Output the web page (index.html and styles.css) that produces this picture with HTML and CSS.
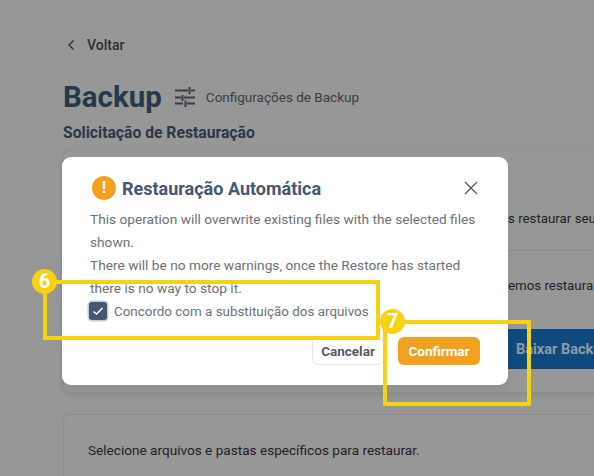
FILE: index.html
```html
<!DOCTYPE html>
<html lang="en">
<head>
    <meta charset="UTF-8">
    <title>Backup</title>
    <link rel="stylesheet" href="styles.css">
</head>
<body>
    <div id="page">
        <a class="back"><svg width="8" height="12" viewBox="0 0 8 12"><path d="M6.500 1.500 2 6l4.500 4.500" fill="none" stroke="#2b2f36" stroke-width="1.400"/></svg>Voltar</a>
        <header class="title-row">
            <h1>Backup</h1>
            <svg class="tune" width="20" height="20" viewBox="0 0 20 20"><path d="M0 3.500h13M14.500 0v7M16 3.500h4M0 10.500h6M7.500 8v6M9 10.500h11M0 16.500h8M10.500 13.500V20M12 16.500h8" fill="none" stroke="#3a3d42" stroke-width="2"/></svg>
            <span class="subtitle">Configurações de Backup</span>
        </header>
        <h2>Solicitação de Restauração</h2>
        <section class="card first">
            <p class="row one">s restaurar seu</p>
            <p class="row two">emos restaurar</p>
            <div class="card-actions"><button class="download">Baixar Backup</button></div>
        </section>
        <section class="card second">
            <p>Selecione arquivos e pastas específicos para restaurar.</p>
        </section>
    </div>

    <div id="modal">
        <div class="modal-head">
            <span class="warn">!</span>
            <h3>Restauração Automática</h3>
            <svg class="close" width="14" height="14" viewBox="0 0 14 14"><path d="M1 1l12 12M13 1 1 13" fill="none" stroke="#555b63" stroke-width="1.300"/></svg>
        </div>
        <p class="modal-text">This operation will overwrite existing files with the selected files shown.<br>There will be no more warnings, once the Restore has started there is no way to stop it.</p>
        <label class="agree">
            <span class="check"><svg width="12" height="10" viewBox="0 0 12 10"><path d="M1.500 5.500 4.500 8l6-6" fill="none" stroke="#fff" stroke-width="1.500"/></svg></span>
            Concordo com a substituição dos arquivos
        </label>
        <div class="modal-actions">
            <button class="cancel">Cancelar</button>
            <button class="confirm">Confirmar</button>
        </div>
    </div>

    <div class="callout box-six"></div>
    <span class="badge badge-six">6</span>
    <div class="callout box-seven"></div>
    <span class="badge badge-seven">7</span>
</body>
</html>
```

FILE: styles.css
```css
* {
    box-sizing: border-box;
}
html, body {
    margin: 0;
    height: 100%;
}
body {
    width: 594px;
    height: 476px;
    overflow: hidden;
    background: #979797;
    font-family: Roboto, sans-serif;
    color: #1f2126;
    position: relative;
}
#page {
    padding: 36px 0 0 63px;
    width: 594px;
    height: 476px;
    overflow: hidden;
}
.back {
    display: flex;
    align-items: center;
    gap: 12px;
    padding-left: 4px;
    font-size: 14px;
    font-weight: 500;
    line-height: 18px;
    color: #2b2f36;
}
.title-row {
    display: flex;
    align-items: center;
    margin-top: 23px;
    height: 40px;
}
h1 {
    margin: 0;
    font-size: 29.500px;
    font-weight: 700;
    color: #27384d;
}
.tune {
    margin-left: 13px;
}
.subtitle {
    margin-left: 11px;
    font-size: 13.500px;
    color: #3a3d42;
}
h2 {
    margin: 7px 0 0;
    font-size: 15.700px;
    line-height: 18px;
    font-weight: 700;
    color: #2b3648;
}
.card {
    width: 620px;
    border: 1px solid #8d8d8d;
    border-radius: 8px;
    padding: 0 24px;
}
.card p {
    margin: 0;
    font-size: 13.600px;
    line-height: 18px;
    white-space: nowrap;
}
.first {
    margin-top: 8px;
    height: 243px;
    border-top: none;
    box-shadow: 0 2px 6px rgba(0, 0, 0, 0.08);
}
.card .row {
    font-size: 13.300px;
    margin: 0 -24px;
}
.row.one {
    padding: 60px 24px 22px 444px;
    border-bottom: 1px solid #8a8a8a;
}
.row.two {
    padding: 26px 24px 0 444px;
}
.card-actions {
    display: flex;
    justify-content: flex-end;
    margin-top: 34px;
}
.download {
    width: 166px;
    height: 40px;
    border: none;
    border-radius: 6px;
    background: #0f4a7e;
    color: #8e9aa6;
    font: 700 14.500px Roboto, sans-serif;
    text-align: left;
    padding-left: 24px;
}
.second {
    margin-top: 21px;
    height: 80px;
    padding-top: 26px;
}
#modal {
    position: absolute;
    left: 62px;
    top: 157px;
    width: 446px;
    height: 228px;
    padding: 18px 28px 0;
    background: #fff;
    border-radius: 9px;
    color: #6d7178;
    box-shadow: 0 6px 8px rgba(0, 0, 0, 0.05);
}
.modal-head {
    display: flex;
    align-items: center;
    height: 26px;
}
.warn {
    width: 24px;
    height: 24px;
    margin-left: 2px;
    border-radius: 50%;
    background: #f2a01f;
    color: #fff;
    font-size: 16px;
    font-weight: 700;
    text-align: center;
    line-height: 24px;
}
h3 {
    margin: 0 0 0 6px;
    font-size: 18px;
    font-weight: 700;
    color: #475771;
}
.close {
    margin-left: auto;
    margin-right: 2px;
}
.modal-text {
    margin: 7px 0 0;
    font-size: 13.700px;
    line-height: 23px;
}
.agree {
    display: flex;
    align-items: center;
    gap: 7px;
    margin-top: 1px;
    height: 20px;
    font-size: 13.400px;
    margin-left: -1px;
}
.check {
    display: flex;
    align-items: center;
    justify-content: center;
    width: 18px;
    height: 18px;
    border-radius: 3px;
    background: #475771;
    box-shadow: 0 0 0 1.500px #c5cdd8;
}
.modal-actions {
    display: flex;
    justify-content: flex-end;
    align-items: center;
    gap: 14px;
    margin-top: 16px;
}
.modal-actions button {
    height: 28px;
    border-radius: 6px;
    font: 700 13.500px Roboto, sans-serif;
}
.cancel {
    width: 72px;
    background: #fff;
    border: 1px solid #e6e8eb;
    color: #555b63;
}
.confirm {
    width: 82px;
    background: #f2a01f;
    border: none;
    color: #fff;
}
.callout {
    position: absolute;
    border: 4px solid #f5d212;
}
.box-six {
    left: 43px;
    top: 280px;
    width: 337px;
    height: 60px;
}
.box-seven {
    left: 383px;
    top: 320px;
    width: 148px;
    height: 86px;
}
.badge {
    position: absolute;
    width: 25px;
    height: 25px;
    border-radius: 50%;
    background: #f5d212;
    color: #fff;
    font-size: 20px;
    font-weight: 700;
    line-height: 25px;
    text-align: center;
}
.badge-six {
    left: 32px;
    top: 269px;
}
.badge-seven {
    left: 380px;
    top: 309px;
}
```
